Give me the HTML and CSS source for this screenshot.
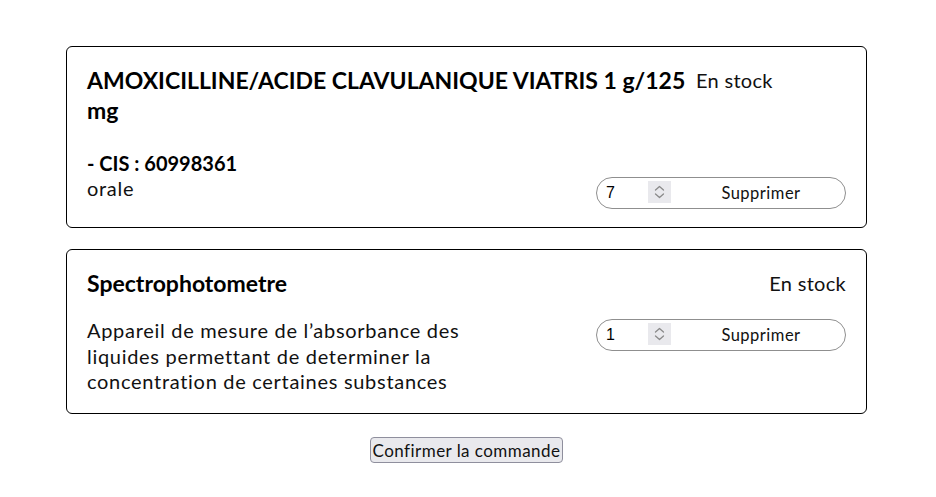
FILE: index.html
```html
<!DOCTYPE html>
<html lang="fr">
<head>
<meta charset="utf-8">
<title>Panier</title>
<link rel="stylesheet" href="styles.css">
</head>
<body>
<main class="cart">
  <section class="card">
    <div class="card-head card-head-start">
      <div class="head-left">
        <h2 class="title title-long">AMOXICILLINE/ACIDE CLAVULANIQUE VIATRIS 1 g/125 mg</h2>
        <p class="cis">- CIS : 60998361</p>
      </div>
      <span class="stock">En stock</span>
    </div>
    <div class="card-body">
      <p class="desc">orale</p>
      <div class="qty-group">
        <input class="qty" type="number" value="7" min="1">
        <span class="spin" aria-hidden="true">
          <svg width="23" height="22" viewBox="0 0 23 22"><polyline points="7.5,9 11.5,5.5 15.5,9" /><polyline points="7.5,13 11.5,16.5 15.5,13" /></svg>
        </span>
        <button class="remove" type="button">Supprimer</button>
      </div>
    </div>
  </section>
  <section class="card">
    <div class="card-head">
      <div class="head-left">
        <h2 class="title">Spectrophotometre</h2>
      </div>
      <span class="stock">En stock</span>
    </div>
    <div class="card-body">
      <p class="desc">Appareil de mesure de l’absorbance des liquides permettant de determiner la concentration de certaines substances</p>
      <div class="qty-group">
        <input class="qty" type="number" value="1" min="1">
        <span class="spin" aria-hidden="true">
          <svg width="23" height="22" viewBox="0 0 23 22"><polyline points="7.5,9 11.5,5.5 15.5,9" /><polyline points="7.5,13 11.5,16.5 15.5,13" /></svg>
        </span>
        <button class="remove" type="button">Supprimer</button>
      </div>
    </div>
  </section>
  <div class="actions">
    <button class="confirm" type="button">Confirmer la commande</button>
  </div>
</main>
</body>
</html>
```

FILE: styles.css
```css
* { box-sizing: border-box; }

body {
  margin: 0;
  background: #fff;
  color: #000;
  font-family: Lato, "Noto Sans", sans-serif;
}

.cart {
  width: 801px;
  margin: 46px 0 0 66px;
  display: flex;
  flex-direction: column;
  gap: 21px;
}

.card {
  border: 1px solid #000;
  border-radius: 6px;
  padding: 18px 20px 18px;
}

.card-head {
  display: flex;
  justify-content: space-between;
  align-items: flex-start;
  gap: 12px;
  margin-bottom: 20px;
}

.card-head-start {
  justify-content: flex-start;
  gap: 0;
}

.head-left { flex: 0 1 auto; }

.title {
  margin: 0;
  font-size: 23px;
  line-height: 30px;
  font-weight: 700;
}

.title-long { width: 609px; }

.cis {
  margin: 26px 0 -20px;
  font-size: 20px;
  line-height: 25px;
  font-weight: 700;
}

.stock {
  flex: none;
  white-space: nowrap;
  font-size: 20px;
  line-height: 30px;
  letter-spacing: 0.3px;
  color: #111;
}

.card-body {
  display: flex;
  justify-content: space-between;
  align-items: flex-start;
}

.desc {
  margin: 0;
  max-width: 50%;
  font-size: 20px;
  line-height: 25.7px;
  letter-spacing: 0.7px;
  color: #111;
}

.qty-group {
  width: 250px;
  height: 32px;
  margin-top: 1px;
  border: 1px solid #8f8f8f;
  border-radius: 16px;
  display: flex;
  align-items: center;
  overflow: hidden;
}

.qty {
  width: 51px;
  height: 24px;
  border: none;
  outline: none;
  background: transparent;
  font-family: Arial, "Liberation Sans", sans-serif;
  font-size: 16px;
  color: #000;
  padding: 0 0 0 9px;
  -moz-appearance: textfield;
}

.qty::-webkit-inner-spin-button,
.qty::-webkit-outer-spin-button {
  -webkit-appearance: none;
  margin: 0;
}

.spin {
  flex: none;
  width: 23px;
  height: 22px;
  margin-top: -3px;
  background: #e9e9ed;
  display: flex;
}

.spin polyline {
  fill: none;
  stroke: #8a8a8a;
  stroke-width: 1.3;
  stroke-linecap: round;
  stroke-linejoin: round;
}

.remove {
  flex: 1;
  height: 100%;
  padding: 0 0 0 6px;
  border: none;
  background: transparent;
  font-family: Lato, "Noto Sans", sans-serif;
  font-size: 16.5px;
  letter-spacing: 0.5px;
  color: #111;
  cursor: pointer;
}

.actions {
  display: flex;
  justify-content: center;
  margin-top: 2px;
}

.confirm {
  font-family: Lato, "Noto Sans", sans-serif;
  font-size: 17px;
  letter-spacing: 0.45px;
  color: #111;
  background: #e9e9ed;
  border: 1px solid #8f8f9d;
  border-radius: 4px;
  padding: 2px 2px 1px;
  line-height: 21px;
}
```
